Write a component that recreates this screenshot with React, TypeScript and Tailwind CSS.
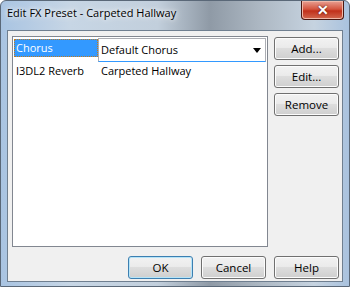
const font = { fontFamily: '"Open Sans", "Noto Sans", sans-serif' };

function WinButton({ label, primary }: { label: string; primary?: boolean }) {
  return (
    <button
      className={`relative w-[65px] h-[23px] rounded-[3px] border text-[11.5px] text-black flex items-center justify-center bg-[linear-gradient(#f2f2f2_0%,#ebebeb_45%,#dddddd_50%,#cfcfcf_100%)] ${
        primary ? 'border-[#3c7fb1] shadow-[inset_0_0_0_1px_#b6e4f8]' : 'border-[#707070] shadow-[inset_0_0_0_1px_#fcfcfc]'
      }`}
    >
      {label}
    </button>
  );
}

export default function App() {
  return (
    <div className="w-[350px] h-[287px] overflow-hidden" style={font}>
      <div className="w-[350px] h-[287px] flex flex-col rounded-t-[6px] border border-[#5a6878] bg-[linear-gradient(90deg,#a9c4e2_0%,#c7d6e5_20%,#c2cfdc_45%,#8f9aa6_60%,#aeb9c4_75%,#c6d3e0_90%,#a9c2de_100%)]">
        {/* title bar */}
        <div className="h-[29px] flex items-start justify-between shrink-0">
          <div className="pl-[6px] pt-[6px] text-[11px] text-black leading-none whitespace-nowrap [text-shadow:0_0_8px_#ffffff,0_0_4px_#ffffff]">
            Edit FX Preset - Carpeted Hallway
          </div>
          <div className="mr-[5px] w-[43px] h-[19px] rounded-b-[4px] border border-t-0 border-[#4b1710] bg-[linear-gradient(#e8a093_0%,#d4553f_45%,#c1301a_55%,#d2684f_100%)] flex items-center justify-center shadow-[inset_0_0_0_1px_#f0b8a8]">
            <span className="text-white text-[14px] font-bold leading-none [text-shadow:0_0_2px_#3a0a00]">✕</span>
          </div>
        </div>
        {/* client */}
        <div className="ml-[6px] mr-[6px] mb-[4px] flex-1 border border-[#6f7f90] bg-[#f0f0f0] pt-[5px] pl-[4px] pr-[3px] flex flex-col">
          <div className="flex gap-[6px]">
            <div className="w-[257px] h-[211px] border border-[#828790] bg-white p-[1px] text-[11px] text-black">
              <div className="flex h-[24px]">
                <div className="w-[84px] h-[18px] mt-[1px] bg-[#3399ff] text-white flex items-center pl-[2px] outline outline-1 outline-dotted outline-[#c27a1c] -outline-offset-1">
                  Chorus
                </div>
                <div className="w-[168px] h-[24px] border border-[#abadb3] border-b-[#3399ff] bg-white flex items-center justify-between pl-[2px] pr-[4px]">
                  <span>Default Chorus</span>
                  <svg width="8" height="5" viewBox="0 0 8 5">
                    <path d="M0 0h8L4 5z" fill="#000" />
                  </svg>
                </div>
              </div>
              <div className="flex h-[18px] items-center">
                <div className="w-[84px] pl-[2px]">I3DL2 Reverb</div>
                <div className="pl-[3px]">Carpeted Hallway</div>
              </div>
            </div>
            <div className="flex flex-col gap-[5px] pt-[1px]">
              <WinButton label="Add..." />
              <WinButton label="Edit..." />
              <WinButton label="Remove" />
            </div>
          </div>
          <div className="flex justify-end gap-[8px] mt-[9px]">
            <WinButton label="OK" primary />
            <WinButton label="Cancel" />
            <WinButton label="Help" />
          </div>
        </div>
      </div>
    </div>
  );
}
